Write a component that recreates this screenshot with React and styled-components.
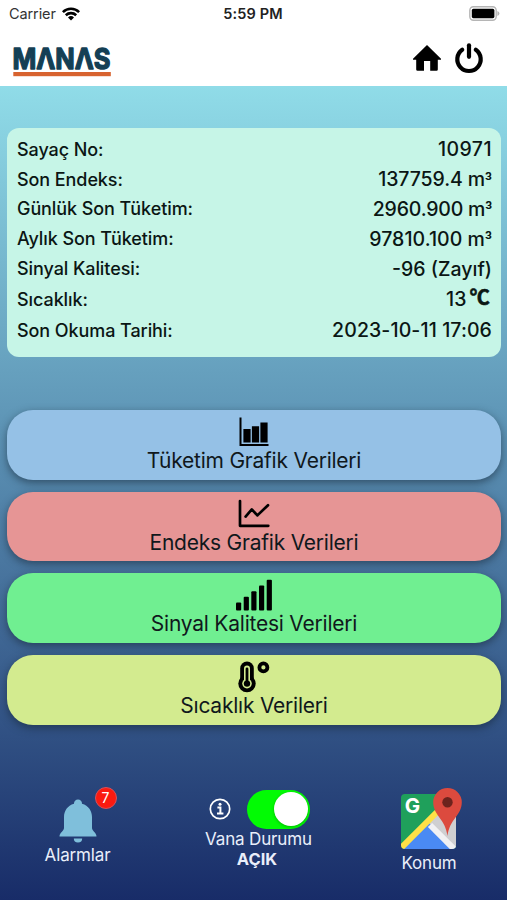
import React from 'react'
import styled, { createGlobalStyle } from 'styled-components'

const readings = [
    { label: 'Sayaç No:', value: '10971', spacing: '0.45px' },
    { label: 'Son Endeks:', value: '137759.4 m', cubic: true, spacing: '-0.1px' },
    { label: 'Günlük Son Tüketim:', value: '2960.900 m', cubic: true, spacing: '-0.2px' },
    { label: 'Aylık Son Tüketim:', value: '97810.100 m', cubic: true, spacing: '0.05px' },
    { label: 'Sinyal Kalitesi:', value: '-96 (Zayıf)', spacing: '0px' },
    { label: 'Sıcaklık:', value: '13', unit: '℃', tall: true, spacing: '0.2px' },
    { label: 'Son Okuma Tarihi:', value: '2023-10-11 17:06', spacing: '0.1px' },
]

function BarsIcon() {
    return (
        <svg width="40" height="32" viewBox="0 0 40 32">
            <path d="M5.5 1.5h2v26.4h27V30h-29z" />
            <path d="M9.4 13h7.2v13.5H9.4zM17.9 10.3h7.2v16.2h-7.2zM26.4 6.5h7.2v20h-7.2z" />
        </svg>
    )
}

function LineIcon() {
    return (
        <svg width="40" height="32" viewBox="0 0 40 32" fill="none" stroke="#000" strokeWidth="2.7" strokeLinecap="round" strokeLinejoin="round">
            <path d="M6 3v24.8h28.3" />
            <path d="M11.6 18.6l6.2-7.2 5.6 6L34 7.2" />
        </svg>
    )
}

function SignalIcon() {
    return (
        <svg width="40" height="32" viewBox="0 0 40 32">
            <rect x="2" y="23.5" width="5.2" height="8" rx="1" />
            <rect x="9.7" y="17.8" width="5.2" height="13.7" rx="1" />
            <rect x="17.3" y="12.2" width="5.2" height="19.3" rx="1" />
            <rect x="25" y="6.5" width="5.2" height="25" rx="1" />
            <rect x="32.7" y="0.8" width="5.2" height="30.7" rx="1" />
        </svg>
    )
}

function ThermoIcon() {
    return (
        <svg width="40" height="32" viewBox="0 0 40 32" strokeLinecap="round">
            <path d="M13 7.4v15" stroke="#000" strokeWidth="13.6" />
            <circle cx="13" cy="22.6" r="8.7" />
            <path d="M13 7.4v15" stroke="#d3eb8f" strokeWidth="6" />
            <circle cx="13" cy="22.6" r="4.8" fill="#d3eb8f" />
            <path d="M13 8v14" stroke="#000" strokeWidth="2.8" />
            <circle cx="13" cy="22.6" r="3.2" />
            <circle cx="29.4" cy="6.4" r="4" fill="none" stroke="#000" strokeWidth="3.8" />
        </svg>
    )
}

const menu = [
    { title: 'Tüketim Grafik Verileri', color: '#95c1e6', icon: <BarsIcon /> },
    { title: 'Endeks Grafik Verileri', color: '#e69595', icon: <LineIcon /> },
    { title: 'Sinyal Kalitesi Verileri', color: '#70ef91', icon: <SignalIcon /> },
    { title: 'Sıcaklık Verileri', color: '#d3eb8f', icon: <ThermoIcon /> },
]

function Logo() {
    return (
        <svg width="100" height="32" viewBox="0 0 100 32" role="img" aria-label="MANAS">
            <text x="0.5" y="23.6" textLength="98" lengthAdjust="spacingAndGlyphs" fontSize="28" fontWeight="700" fontFamily="Inter" fill="#143f55" stroke="#143f55" strokeWidth="1.3" strokeLinejoin="round">MΛNΛS</text>
            <rect x="1.3" y="27" width="97.5" height="4.2" fill="#d8632f" />
        </svg>
    )
}

function MapIcon() {
    return (
        <svg width="64" height="64" viewBox="0 0 64 64">
            <defs>
                <clipPath id="tile"><rect x="4" y="7" width="55" height="55" rx="4" /></clipPath>
            </defs>
            <g clipPath="url(#tile)">
                <rect x="4" y="7" width="55" height="55" fill="#1fa05b" />
                <path d="M59 14V62L30 36Z" fill="#cfcfd1" />
                <path d="M4 64L32 36L60 64Z" fill="#4a8af4" />
                <path d="M1 64L50 15" stroke="#ffe047" strokeWidth="6" />
                <path d="M33 38L61 66" stroke="#f1f1f3" strokeWidth="6" />
            </g>
            <text x="7.8" y="26" fontSize="20.5" fontWeight="700" fontFamily="Inter" fill="#fff">G</text>
            <path d="M50.5 1A14.3 14.3 0 0 0 36.2 15.3C36.2 28.5 48.5 32 50.5 49C52.5 32 64.8 28.5 64.8 15.3A14.3 14.3 0 0 0 50.5 1Z" fill="#dc4a3e" />
            <circle cx="50.5" cy="15.2" r="5.2" fill="#6d231d" />
        </svg>
    )
}

function App() {
    return (
        <Screen>
            <GlobalStyle />
            <StatusBar>
                <Carrier>
                    Carrier
                    <svg width="18" height="14" viewBox="0 0 18 14" fill="none" stroke="#000" strokeWidth="2.6">
                        <path d="M0.9 5.1a11.6 11.6 0 0 1 16.2 0" />
                        <path d="M3.8 8.2a7.5 7.5 0 0 1 10.4 0" />
                        <path d="M9 13.6l-3-3.1a4.3 4.3 0 0 1 6 0z" fill="#000" stroke="none" />
                    </svg>
                </Carrier>
                <Clock>5:59 PM</Clock>
                <Battery>
                    <svg width="31" height="15" viewBox="0 0 31 15">
                        <rect x="0.8" y="0.8" width="26.4" height="13.4" rx="3.6" fill="#fff" stroke="#b5b5b5" strokeWidth="1.4" />
                        <rect x="2.8" y="2.8" width="22.6" height="9.4" rx="1.6" />
                        <path d="M28.4 5v5q2-.8 2-2.5t-2-2.5z" fill="#b5b5b5" />
                    </svg>
                </Battery>
            </StatusBar>
            <Header>
                <Logo />
                <Actions>
                    <svg width="28" height="26" viewBox="0 0 28 26">
                        <path d="M14 0L28 13.8V14.8H24.8V24.6Q24.8 25.8 23.6 25.8H17.2V16H11V25.8H4.6Q3.2 25.8 3.2 24.6V14.8H0V13.8Z" />
                    </svg>
                    <svg width="28" height="30" viewBox="0 0 28 30" fill="none" stroke="#000" strokeWidth="4.2" strokeLinecap="round">
                        <path d="M7.2 6.8a11.7 11.7 0 1 0 13.6 0" />
                        <path d="M14 2.3v11.5" />
                    </svg>
                </Actions>
            </Header>
            <Body>
                <Card>
                    {readings.map((row) => (
                        <Row key={row.label} $tall={row.tall}>
                            <Label>{row.label}</Label>
                            <Value $spacing={row.spacing}>
                                {row.value}
                                {row.cubic && <Cubic>³</Cubic>}
                                {row.unit && <Unit>{row.unit}</Unit>}
                            </Value>
                        </Row>
                    ))}
                </Card>
                <Menu>
                    {menu.map((item) => (
                        <MenuButton key={item.title} $color={item.color}>
                            {item.icon}
                            <span>{item.title}</span>
                        </MenuButton>
                    ))}
                </Menu>
                <Footer>
                    <Alarms>
                        <BellWrap>
                            <svg width="38" height="44" viewBox="0 0 38 44" fill="#7fbfdb">
                                <path d="M19 0.5a4 4 0 0 1 4 4.2C29.6 6.5 33 12 33 18V29C33 32 37.5 33.500 37.500 37.500H0.500C0.500 33.500 5 32 5 29V18C5 12 8.400 6.500 15 4.700A4 4 0 0 1 19 0.500Z" />
                                <path d="M14.800 39.600h8.400a4.200 3.900 0 0 1-8.400 0z" />
                            </svg>
                            <Badge>7</Badge>
                        </BellWrap>
                        <FooterLabel>Alarmlar</FooterLabel>
                    </Alarms>
                    <Valve>
                        <SwitchRow>
                            <svg width="22" height="22" viewBox="0 0 22 22" fill="none" stroke="#fff" strokeWidth="1.7">
                                <circle cx="11" cy="11" r="9.7" />
                                <path d="M8.4 9.4h3v6M8 15.6h6.4" strokeWidth="2" />
                                <circle cx="11" cy="6.2" r="1.5" fill="#fff" stroke="none" />
                            </svg>
                            <Toggle><Knob /></Toggle>
                        </SwitchRow>
                        <FooterLabel>Vana Durumu</FooterLabel>
                        <ValveState>AÇIK</ValveState>
                    </Valve>
                    <Location>
                        <MapIcon />
                        <FooterLabel>Konum</FooterLabel>
                    </Location>
                </Footer>
            </Body>
        </Screen>
    )
}

export default App

const GlobalStyle = createGlobalStyle`
    body {
        margin: 0;
        font-family: Inter, "Liberation Sans", sans-serif;
        color: #0b1614;
    }
    svg {
        display: block;
        flex: none;
        overflow: visible;
    }
`
const Screen = styled.div`
    width: 507px;
    height: 900px;
    display: flex;
    flex-direction: column;
    overflow: hidden;
    background: #fff;
`
const StatusBar = styled.div`
    height: 27px;
    display: grid;
    grid-template-columns: 1fr auto 1fr;
    align-items: center;
    padding: 0 7px 0 9px;
    font-size: 14.5px;
`
const Carrier = styled.div`
    display: flex;
    align-items: center;
    gap: 6px;
    color: #333;
    letter-spacing: -0.1px;
`
const Clock = styled.div`
    margin-left: -3px;
    font-weight: 600;
    letter-spacing: 0.15px;
    color: #222;
`
const Battery = styled.div`
    display: flex;
    justify-content: flex-end;
`
const Header = styled.header`
    height: 59px;
    display: flex;
    align-items: center;
    justify-content: space-between;
    box-sizing: border-box;
    padding: 2px 24px 0 12px;

    > svg {
        margin-top: 6px;
    }
`
const Actions = styled.div`
    display: flex;
    align-items: center;
    gap: 14px;
`
const Body = styled.main`
    flex: 1;
    display: flex;
    flex-direction: column;
    box-sizing: border-box;
    padding: 42px 6px 0 7px;
    background: linear-gradient(#90dce8 0%, #5a8fb2 45%, #182c68 100%);
`
const Card = styled.section`
    height: 229px;
    box-sizing: border-box;
    padding: 6.5px 9px 0 10px;
    border-radius: 12px;
    background: #c6f5e7;
`
const Row = styled.div`
    height: ${(props) => (props.$tall ? '32px' : '29.8px')};
    display: flex;
    align-items: center;
    justify-content: space-between;
    white-space: nowrap;
`
const Label = styled.span`
    font-size: 18px;
    font-weight: 500;
    letter-spacing: -0.08px;
`
const Value = styled.span`
    display: flex;
    align-items: center;
    font-size: 19.5px;
    font-weight: 500;
    letter-spacing: ${(props) => props.$spacing};
`
const Cubic = styled.span`
    font-family: Roboto, sans-serif;
    font-size: 19px;
    font-weight: 500;
`
const Unit = styled.span`
    margin: -4px 2px 0 3px;
    font-family: "Noto Sans CJK SC", sans-serif;
    font-size: 20px;
    font-weight: 700;
    line-height: 20px;
    -webkit-text-stroke: 0.6px #0b1614;
`
const Menu = styled.nav`
    display: flex;
    flex-direction: column;
    gap: 12px;
    margin-top: 53px;
`
const MenuButton = styled.button`
    height: 69.7px;
    display: flex;
    flex-direction: column;
    align-items: center;
    padding: 6px 0 0;
    border: 0;
    border-radius: 26px;
    background: ${(props) => props.$color};
    box-shadow: 0 3px 9px rgba(20, 35, 50, 0.55);
    font-family: inherit;
    font-size: 21px;
    line-height: 26px;
    letter-spacing: -0.23px;
    color: #10181c;
`
const Footer = styled.footer`
    display: flex;
    justify-content: space-between;
    margin-top: 62px;
    color: #e9eefa;
`
const Alarms = styled.div`
    width: 141px;
    display: flex;
    flex-direction: column;
    align-items: center;
    gap: 2px;
    padding-top: 12px;
`
const BellWrap = styled.div`
    position: relative;
`
const Badge = styled.div`
    position: absolute;
    left: 36px;
    top: -12px;
    width: 22px;
    height: 22px;
    box-sizing: border-box;
    border: 1px solid #d8505a;
    border-radius: 50%;
    background: #fb1a10;
    color: #fff;
    font-size: 14px;
    line-height: 20px;
    text-align: center;
`
const FooterLabel = styled.div`
    font-size: 17px;
    line-height: 20px;
    letter-spacing: -0.15px;
`
const Valve = styled.div`
    width: 180px;
    display: flex;
    flex-direction: column;
    align-items: center;
    box-sizing: border-box;
    padding: 3px 0 0 12px;
`
const SwitchRow = styled.div`
    display: flex;
    align-items: center;
    gap: 16px;
    margin-left: 2px;
`
const Toggle = styled.div`
    width: 63px;
    height: 39px;
    display: flex;
    align-items: center;
    justify-content: flex-end;
    box-sizing: border-box;
    padding-right: 2.5px;
    border-radius: 20px;
    background: #02fb04;
`
const Knob = styled.div`
    width: 34px;
    height: 34px;
    border-radius: 50%;
    background: #fff;
    box-shadow: 0 1px 3px rgba(0, 60, 0, 0.35);
`
const ValveState = styled.div`
    margin-right: 3px;
    font-size: 16.5px;
    font-weight: 700;
    line-height: 21px;
`
const Location = styled.div`
    width: 144px;
    display: flex;
    flex-direction: column;
    align-items: center;
    gap: 2px;
`
